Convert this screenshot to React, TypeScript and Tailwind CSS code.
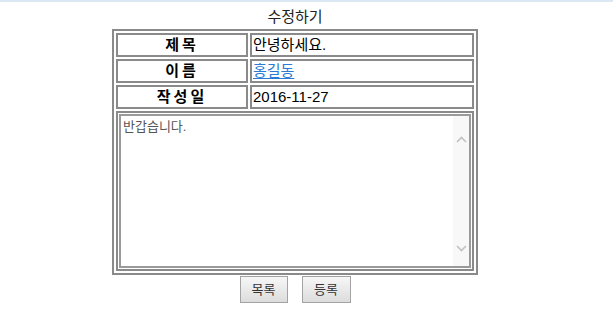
import React from 'react';

const font = "font-['Liberation_Sans','Noto_Sans_CJK_KR',sans-serif]";

const Row = ({ label, children }: { label: string; children: React.ReactNode }) => (
  <>
    <div className="h-[24px] border-2 border-[#8a8a8a] flex items-center justify-center text-[15px] font-bold tracking-[3px] text-black">
      {label}
    </div>
    <div className="h-[24px] border-2 border-[#8a8a8a] flex items-center pl-[1px] text-[15px] text-black">
      {children}
    </div>
  </>
);

const Chevron = ({ up }: { up?: boolean }) => (
  <svg width="11" height="7" viewBox="0 0 11 7" className="block">
    <path
      d={up ? 'M1 6 L5.5 1.5 L10 6' : 'M1 1 L5.5 5.5 L10 1'}
      fill="none"
      stroke="#c2c2c2"
      strokeWidth="1.6"
    />
  </svg>
);

export default function App() {
  return (
    <div className={`w-[613px] h-[329px] bg-white border-t-2 border-[#dce7f4] ${font}`}>
      <div className="w-[590px] flex flex-col items-center">
        {/* title */}
        <div className="mt-[5px] h-[21px] flex items-center text-[15px] text-[#222]">수정하기</div>

        {/* form table */}
        <div className="mt-[1px] border-2 border-[#8a8a8a] p-[2px] grid grid-cols-[132px_224px] gap-[2px]">
          <Row label="제목">안녕하세요.</Row>
          <Row label="이름">
            <a href="#" className="text-[#2b7bd6] underline underline-offset-2">홍길동</a>
          </Row>
          <Row label="작성일">2016-11-27</Row>

          <div className="col-span-2 h-[160px] border-2 border-[#8a8a8a] p-[1px]">
            <div className="h-full border-2 border-[#9a9a9a] flex bg-white">
              <div className="flex-1 pl-[2px] pt-[2px] text-[13px] leading-[17px] text-[#555]">반갑습니다.</div>
              <div className="w-[16px] bg-[#f8f8f8] flex flex-col items-center justify-between pt-[20px] pb-[14px]">
                <Chevron up />
                <Chevron />
              </div>
            </div>
          </div>
        </div>

        {/* buttons */}
        <div className="mt-[1px] flex gap-[14px]">
          <button className="w-[48px] h-[27px] border border-[#a3a3a3] bg-gradient-to-b from-[#f7f7f7] to-[#dcdcdc] text-[13px] text-[#333]">
            목록
          </button>
          <button className="w-[49px] h-[27px] border border-[#a3a3a3] bg-gradient-to-b from-[#f7f7f7] to-[#dcdcdc] text-[13px] text-[#333]">
            등록
          </button>
        </div>
      </div>
    </div>
  );
}
